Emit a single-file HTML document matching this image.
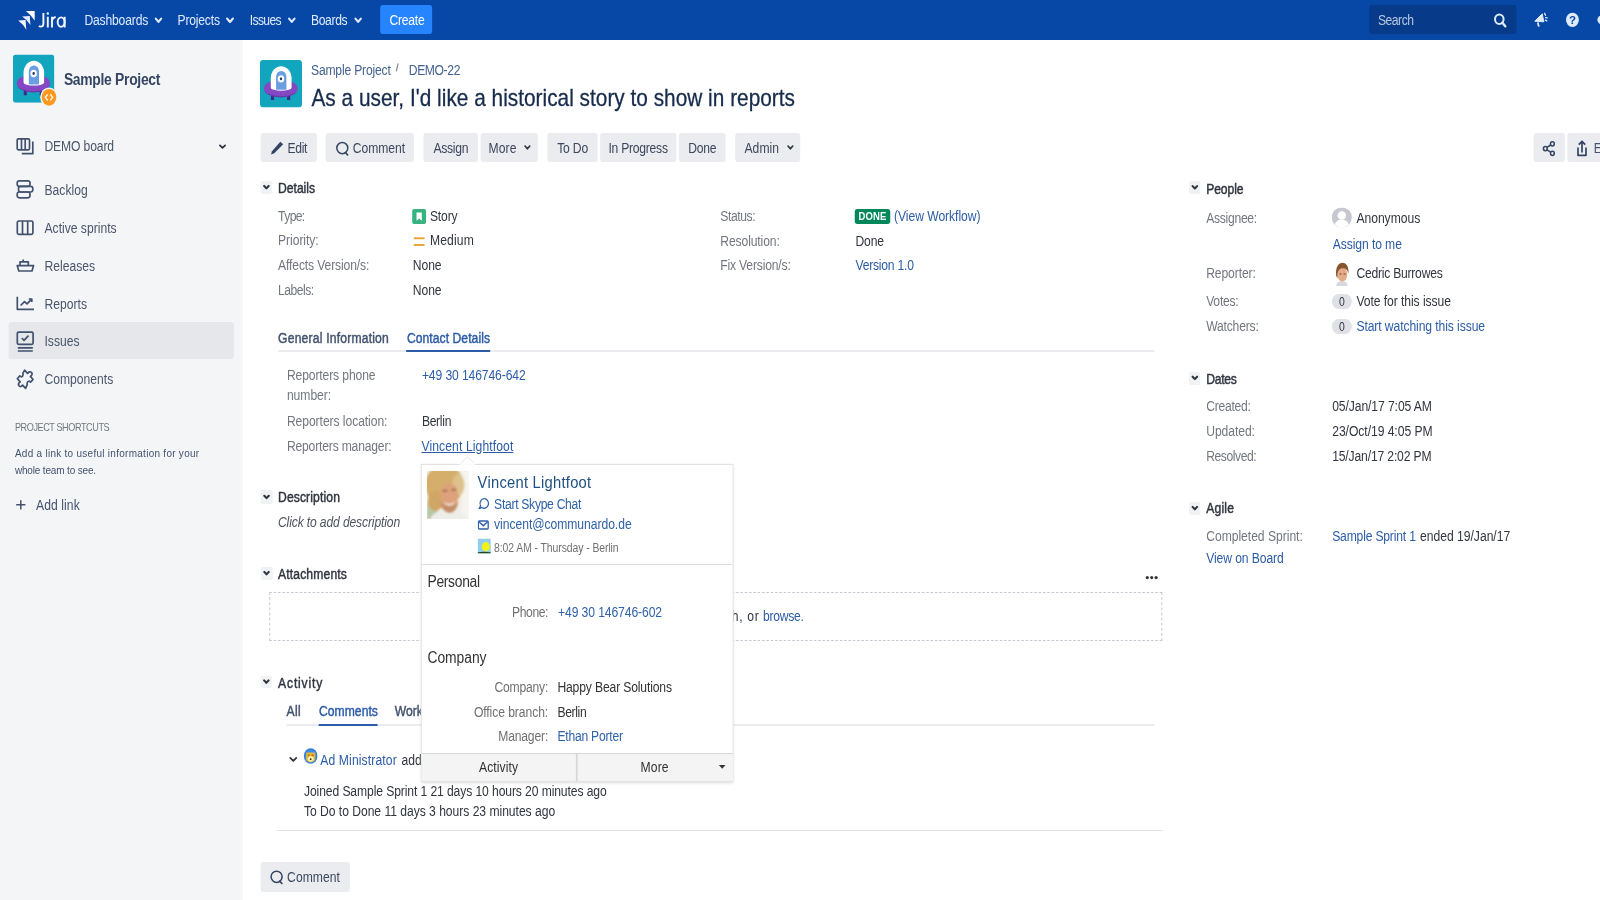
<!DOCTYPE html>
<html><head><meta charset="utf-8"><style>
html,body{margin:0;padding:0;width:1600px;height:900px;overflow:hidden;background:#fff;}
#w{position:absolute;left:0;top:0;width:1847.58px;height:900px;transform:scaleX(0.866);transform-origin:0 0;font-family:"Liberation Sans",sans-serif;}
.t{position:absolute;white-space:nowrap;}
.r{position:absolute;box-sizing:border-box;}
</style></head><body><div id="w">
<div class="r" style="left:0.00px;top:0.00px;width:1847.58px;height:40.00px;background:#0747A6;"></div>
<div class="r" style="left:0.00px;top:40.00px;width:280.02px;height:860.00px;background:#F4F5F7;"></div>
<span class="t" style="left:97.46px;top:12.60px;font-size:14px;line-height:14px;color:#DEEBFF;letter-spacing:-0.193px;">Dashboards</span>
<span class="t" style="left:204.97px;top:12.60px;font-size:14px;line-height:14px;color:#DEEBFF;letter-spacing:-0.223px;">Projects</span>
<span class="t" style="left:288.39px;top:12.60px;font-size:14px;line-height:14px;color:#DEEBFF;letter-spacing:-0.729px;">Issues</span>
<span class="t" style="left:359.12px;top:12.60px;font-size:14px;line-height:14px;color:#DEEBFF;letter-spacing:-0.417px;">Boards</span>
<div class="r" style="left:439.09px;top:5.00px;width:60.33px;height:29.40px;background:#2684FF;border-radius:3px;"></div>
<span class="t" style="left:449.65px;top:12.60px;font-size:14px;line-height:14px;color:#fff;letter-spacing:-0.267px;">Create</span>
<div class="r" style="left:1581.29px;top:5.25px;width:169.28px;height:29.05px;background:#083A8A;border-radius:3px;"></div>
<span class="t" style="left:1591.11px;top:13.30px;font-size:14px;line-height:14px;color:#B8C7E0;letter-spacing:-0.542px;">Search</span>
<span class="t" style="left:73.79px;top:71.70px;font-size:16px;line-height:16px;color:#344563;font-weight:bold;letter-spacing:-0.323px;">Sample Project</span>
<div class="r" style="left:10.05px;top:322.10px;width:259.93px;height:37.30px;background:#E5E7EB;border-radius:3px;"></div>
<span class="t" style="left:51.39px;top:139.10px;font-size:14px;line-height:14px;color:#4A566B;letter-spacing:-0.156px;">DEMO board</span>
<span class="t" style="left:51.39px;top:182.80px;font-size:14px;line-height:14px;color:#4A566B;">Backlog</span>
<span class="t" style="left:51.39px;top:220.50px;font-size:14px;line-height:14px;color:#4A566B;">Active sprints</span>
<span class="t" style="left:51.39px;top:258.80px;font-size:14px;line-height:14px;color:#4A566B;">Releases</span>
<span class="t" style="left:51.39px;top:296.70px;font-size:14px;line-height:14px;color:#4A566B;">Reports</span>
<span class="t" style="left:51.39px;top:334.40px;font-size:14px;line-height:14px;color:#4A566B;">Issues</span>
<span class="t" style="left:51.39px;top:372.30px;font-size:14px;line-height:14px;color:#4A566B;">Components</span>
<span class="t" style="left:17.21px;top:422.45px;font-size:10.5px;line-height:10.5px;color:#72777F;letter-spacing:-0.467px;">PROJECT SHORTCUTS</span>
<span class="t" style="left:17.21px;top:448.15px;font-size:11.5px;line-height:11.5px;color:#42526E;letter-spacing:0.332px;">Add a link to useful information for your</span>
<span class="t" style="left:17.21px;top:464.85px;font-size:11.5px;line-height:11.5px;color:#42526E;letter-spacing:-0.166px;">whole team to see.</span>
<span class="t" style="left:41.57px;top:497.70px;font-size:14px;line-height:14px;color:#42526E;letter-spacing:0.096px;">Add link</span>
<span class="t" style="left:359.12px;top:62.60px;font-size:14px;line-height:14px;color:#42628F;letter-spacing:-0.215px;">Sample Project</span>
<span class="t" style="left:472.00px;top:62.60px;font-size:14px;line-height:14px;color:#42628F;letter-spacing:-0.436px;">DEMO-22</span>
<span class="t" style="left:359.70px;top:86.00px;font-size:24px;line-height:24px;color:#172B4D;letter-spacing:0.026px;-webkit-text-stroke:0.3px currentColor;">As a user, I&#x27;d like a historical story to show in reports</span>
<div class="r" style="left:300.52px;top:133.00px;width:65.07px;height:29.00px;background:#EBECF0;border-radius:3px;"></div>
<span class="t" style="left:331.87px;top:140.65px;font-size:14px;line-height:14px;color:#3B475C;letter-spacing:-0.315px;">Edit</span>
<div class="r" style="left:375.87px;top:133.00px;width:102.48px;height:29.00px;background:#EBECF0;border-radius:3px;"></div>
<span class="t" style="left:407.27px;top:140.65px;font-size:14px;line-height:14px;color:#3B475C;letter-spacing:-0.008px;">Comment</span>
<div class="r" style="left:488.91px;top:133.00px;width:62.82px;height:29.00px;background:#EBECF0;border-radius:3px;"></div>
<span class="t" style="left:500.58px;top:140.65px;font-size:14px;line-height:14px;color:#3B475C;letter-spacing:-0.325px;">Assign</span>
<div class="r" style="left:554.50px;top:133.00px;width:66.86px;height:29.00px;background:#EBECF0;border-radius:3px;"></div>
<span class="t" style="left:564.20px;top:140.65px;font-size:14px;line-height:14px;color:#3B475C;letter-spacing:0.109px;">More</span>
<div class="r" style="left:632.45px;top:133.00px;width:57.62px;height:29.00px;background:#EBECF0;border-radius:3px;"></div>
<span class="t" style="left:643.42px;top:140.65px;font-size:14px;line-height:14px;color:#3B475C;letter-spacing:-0.201px;">To Do</span>
<div class="r" style="left:692.96px;top:133.00px;width:87.88px;height:29.00px;background:#EBECF0;border-radius:3px;"></div>
<span class="t" style="left:702.66px;top:140.65px;font-size:14px;line-height:14px;color:#3B475C;letter-spacing:-0.293px;">In Progress</span>
<div class="r" style="left:784.06px;top:133.00px;width:54.39px;height:29.00px;background:#EBECF0;border-radius:3px;"></div>
<span class="t" style="left:794.69px;top:140.65px;font-size:14px;line-height:14px;color:#3B475C;letter-spacing:-0.313px;">Done</span>
<div class="r" style="left:849.08px;top:133.00px;width:75.40px;height:29.00px;background:#EBECF0;border-radius:3px;"></div>
<span class="t" style="left:859.58px;top:140.65px;font-size:14px;line-height:14px;color:#3B475C;letter-spacing:0.100px;">Admin</span>
<div class="r" style="left:1770.67px;top:133.40px;width:36.49px;height:28.60px;background:#EBECF0;border-radius:3px;"></div>
<div class="r" style="left:1809.70px;top:133.40px;width:49.42px;height:28.60px;background:#EBECF0;border-radius:3px;"></div>
<span class="t" style="left:1840.30px;top:140.65px;font-size:14px;line-height:14px;color:#42526E;">Export</span>
<div class="r" style="left:300.81px;top:180.80px;width:13.63px;height:13.00px;background:#F1F2F4;border-radius:2px;"></div>
<span class="t" style="left:321.13px;top:180.60px;font-size:14px;line-height:14px;color:#30353F;-webkit-text-stroke:0.45px currentColor;letter-spacing:-0.026px;">Details</span>
<span class="t" style="left:321.13px;top:208.50px;font-size:14px;line-height:14px;color:#72777F;letter-spacing:-0.728px;">Type:</span>
<span class="t" style="left:321.13px;top:233.10px;font-size:14px;line-height:14px;color:#72777F;letter-spacing:-0.076px;">Priority:</span>
<span class="t" style="left:321.13px;top:257.70px;font-size:14px;line-height:14px;color:#72777F;letter-spacing:-0.150px;">Affects Version/s:</span>
<span class="t" style="left:321.13px;top:283.00px;font-size:14px;line-height:14px;color:#72777F;letter-spacing:-0.593px;">Labels:</span>
<div class="r" style="left:475.98px;top:209.00px;width:15.94px;height:15.10px;background:#36B37E;border-radius:2px;"></div>
<span class="t" style="left:496.42px;top:208.50px;font-size:14px;line-height:14px;color:#30353F;letter-spacing:-0.161px;">Story</span>
<span class="t" style="left:496.42px;top:233.10px;font-size:14px;line-height:14px;color:#30353F;letter-spacing:0.169px;">Medium</span>
<span class="t" style="left:476.67px;top:257.70px;font-size:14px;line-height:14px;color:#30353F;letter-spacing:-0.082px;">None</span>
<span class="t" style="left:476.67px;top:283.00px;font-size:14px;line-height:14px;color:#30353F;letter-spacing:-0.082px;">None</span>
<span class="t" style="left:831.76px;top:208.75px;font-size:14px;line-height:14px;color:#72777F;letter-spacing:-0.485px;">Status:</span>
<span class="t" style="left:831.76px;top:233.50px;font-size:14px;line-height:14px;color:#72777F;letter-spacing:-0.132px;">Resolution:</span>
<span class="t" style="left:831.76px;top:258.30px;font-size:14px;line-height:14px;color:#72777F;letter-spacing:-0.204px;">Fix Version/s:</span>
<div class="r" style="left:987.30px;top:208.80px;width:40.42px;height:15.40px;background:#00875A;border-radius:3px;"></div>
<span class="t" style="left:991.34px;top:211.00px;font-size:11px;line-height:11px;color:#fff;font-weight:bold;letter-spacing:0.138px;">DONE</span>
<span class="t" style="left:1032.33px;top:208.50px;font-size:14px;line-height:14px;color:#2C5CA8;letter-spacing:-0.048px;">(View Workflow)</span>
<span class="t" style="left:987.88px;top:233.50px;font-size:14px;line-height:14px;color:#30353F;letter-spacing:-0.197px;">Done</span>
<span class="t" style="left:987.88px;top:258.30px;font-size:14px;line-height:14px;color:#2C5CA8;letter-spacing:-0.258px;">Version 1.0</span>
<span class="t" style="left:321.13px;top:330.80px;font-size:14px;line-height:14px;color:#42526E;-webkit-text-stroke:0.45px currentColor;letter-spacing:0.228px;">General Information</span>
<span class="t" style="left:469.86px;top:330.80px;font-size:14px;line-height:14px;color:#2C5CA8;-webkit-text-stroke:0.45px currentColor;letter-spacing:0.069px;">Contact Details</span>
<div class="r" style="left:321.02px;top:350.00px;width:1011.55px;height:2.00px;background:#EBECF0;"></div>
<div class="r" style="left:469.11px;top:350.00px;width:96.71px;height:2.30px;background:#2C5CA8;"></div>
<span class="t" style="left:331.29px;top:368.30px;font-size:14px;line-height:14px;color:#72777F;letter-spacing:-0.140px;">Reporters phone</span>
<span class="t" style="left:331.29px;top:388.00px;font-size:14px;line-height:14px;color:#72777F;letter-spacing:-0.029px;">number:</span>
<span class="t" style="left:331.29px;top:413.60px;font-size:14px;line-height:14px;color:#72777F;letter-spacing:-0.076px;">Reporters location:</span>
<span class="t" style="left:331.29px;top:438.60px;font-size:14px;line-height:14px;color:#72777F;letter-spacing:-0.207px;">Reporters manager:</span>
<span class="t" style="left:487.18px;top:368.30px;font-size:14px;line-height:14px;color:#2C5CA8;letter-spacing:-0.123px;">+49 30 146746-642</span>
<span class="t" style="left:487.18px;top:413.60px;font-size:14px;line-height:14px;color:#30353F;letter-spacing:-0.346px;">Berlin</span>
<span class="t" style="left:486.61px;top:438.60px;font-size:14px;line-height:14px;color:#2C5CA8;letter-spacing:0.129px;text-decoration:underline;">Vincent Lightfoot</span>
<div class="r" style="left:301.04px;top:490.30px;width:13.51px;height:13.60px;background:#F1F2F4;border-radius:2px;"></div>
<span class="t" style="left:321.02px;top:490.00px;font-size:14px;line-height:14px;color:#30353F;-webkit-text-stroke:0.45px currentColor;letter-spacing:0.142px;">Description</span>
<span class="t" style="left:321.02px;top:514.60px;font-size:14px;line-height:14px;color:#4E5461;font-style:italic;letter-spacing:-0.161px;">Click to add description</span>
<div class="r" style="left:301.04px;top:566.50px;width:13.51px;height:13.50px;background:#F1F2F4;border-radius:2px;"></div>
<span class="t" style="left:321.02px;top:566.50px;font-size:14px;line-height:14px;color:#30353F;-webkit-text-stroke:0.45px currentColor;letter-spacing:0.169px;">Attachments</span>
<div class="r" style="left:310.85px;top:592.30px;width:1031.18px;height:48.90px;border:1px dashed #C1C7D0;"></div>
<span class="t" style="left:881.06px;top:609.20px;font-size:14px;line-height:14px;color:#2C5CA8;letter-spacing:-0.322px;">browse.</span>
<span class="t" style="left:721.13px;top:609.20px;font-size:14px;line-height:14px;color:#30353F;letter-spacing:0.789px;">Drop files to attach, or</span>
<div class="r" style="left:301.04px;top:675.50px;width:13.05px;height:12.50px;background:#F1F2F4;border-radius:2px;"></div>
<span class="t" style="left:321.13px;top:675.60px;font-size:14px;line-height:14px;color:#30353F;-webkit-text-stroke:0.45px currentColor;letter-spacing:0.953px;">Activity</span>
<span class="t" style="left:330.95px;top:704.20px;font-size:14px;line-height:14px;color:#42526E;-webkit-text-stroke:0.45px currentColor;letter-spacing:0.395px;">All</span>
<span class="t" style="left:368.24px;top:704.20px;font-size:14px;line-height:14px;color:#2C5CA8;-webkit-text-stroke:0.45px currentColor;letter-spacing:0.070px;">Comments</span>
<span class="t" style="left:455.89px;top:704.20px;font-size:14px;line-height:14px;color:#42526E;-webkit-text-stroke:0.45px currentColor;">Work Log</span>
<div class="r" style="left:330.95px;top:724.00px;width:1001.62px;height:2.00px;background:#EBECF0;"></div>
<div class="r" style="left:368.24px;top:724.00px;width:68.24px;height:2.40px;background:#2C5CA8;"></div>
<span class="t" style="left:369.86px;top:752.60px;font-size:14px;line-height:14px;color:#2C5CA8;letter-spacing:0.141px;">Ad Ministrator</span>
<span class="t" style="left:463.63px;top:752.60px;font-size:14px;line-height:14px;color:#30353F;">added a comment</span>
<span class="t" style="left:351.04px;top:784.40px;font-size:14px;line-height:14px;color:#30353F;letter-spacing:-0.116px;">Joined Sample Sprint 1 21 days 10 hours 20 minutes ago</span>
<span class="t" style="left:351.04px;top:804.10px;font-size:14px;line-height:14px;color:#30353F;letter-spacing:-0.037px;">To Do to Done 11 days 3 hours 23 minutes ago</span>
<div class="r" style="left:319.52px;top:830.20px;width:1022.29px;height:1.00px;background:#DFE1E6;"></div>
<div class="r" style="left:301.04px;top:861.90px;width:102.89px;height:30.10px;background:#EBECF0;border-radius:3px;"></div>
<span class="t" style="left:331.52px;top:870.20px;font-size:14px;line-height:14px;color:#3B475C;letter-spacing:0.058px;">Comment</span>
<div class="r" style="left:1373.21px;top:180.90px;width:13.05px;height:13.10px;background:#F1F2F4;border-radius:2px;"></div>
<span class="t" style="left:1392.84px;top:181.50px;font-size:14px;line-height:14px;color:#30353F;-webkit-text-stroke:0.45px currentColor;letter-spacing:-0.087px;">People</span>
<span class="t" style="left:1392.84px;top:210.90px;font-size:14px;line-height:14px;color:#72777F;letter-spacing:-0.326px;">Assignee:</span>
<span class="t" style="left:1392.84px;top:265.50px;font-size:14px;line-height:14px;color:#72777F;letter-spacing:-0.120px;">Reporter:</span>
<span class="t" style="left:1392.84px;top:294.40px;font-size:14px;line-height:14px;color:#72777F;letter-spacing:-0.270px;">Votes:</span>
<span class="t" style="left:1392.84px;top:319.30px;font-size:14px;line-height:14px;color:#72777F;letter-spacing:-0.221px;">Watchers:</span>
<span class="t" style="left:1566.28px;top:210.90px;font-size:14px;line-height:14px;color:#30353F;letter-spacing:-0.029px;">Anonymous</span>
<span class="t" style="left:1539.03px;top:236.60px;font-size:14px;line-height:14px;color:#2C5CA8;letter-spacing:-0.104px;">Assign to me</span>
<span class="t" style="left:1566.28px;top:265.50px;font-size:14px;line-height:14px;color:#30353F;letter-spacing:-0.270px;">Cedric Burrowes</span>
<div class="r" style="left:1538.34px;top:293.80px;width:22.75px;height:15.20px;background:#DFE1E6;border-radius:8px;"></div>
<span class="t" style="left:1546.32px;top:295.50px;font-size:12px;line-height:12px;color:#30353F;">0</span>
<span class="t" style="left:1566.28px;top:294.40px;font-size:14px;line-height:14px;color:#30353F;letter-spacing:-0.073px;">Vote for this issue</span>
<div class="r" style="left:1538.34px;top:319.00px;width:22.75px;height:15.00px;background:#DFE1E6;border-radius:8px;"></div>
<span class="t" style="left:1546.32px;top:320.50px;font-size:12px;line-height:12px;color:#30353F;">0</span>
<span class="t" style="left:1566.28px;top:319.30px;font-size:14px;line-height:14px;color:#2C5CA8;letter-spacing:-0.098px;">Start watching this issue</span>
<div class="r" style="left:1373.21px;top:371.50px;width:13.05px;height:13.10px;background:#F1F2F4;border-radius:2px;"></div>
<span class="t" style="left:1392.84px;top:371.60px;font-size:14px;line-height:14px;color:#30353F;-webkit-text-stroke:0.45px currentColor;letter-spacing:-0.271px;">Dates</span>
<span class="t" style="left:1392.84px;top:398.90px;font-size:14px;line-height:14px;color:#72777F;letter-spacing:-0.289px;">Created:</span>
<span class="t" style="left:1538.34px;top:398.90px;font-size:14px;line-height:14px;color:#30353F;letter-spacing:-0.100px;">05/Jan/17 7:05 AM</span>
<span class="t" style="left:1392.84px;top:424.10px;font-size:14px;line-height:14px;color:#72777F;letter-spacing:-0.073px;">Updated:</span>
<span class="t" style="left:1538.34px;top:424.10px;font-size:14px;line-height:14px;color:#30353F;letter-spacing:-0.054px;">23/Oct/19 4:05 PM</span>
<span class="t" style="left:1392.84px;top:448.80px;font-size:14px;line-height:14px;color:#72777F;letter-spacing:-0.502px;">Resolved:</span>
<span class="t" style="left:1538.34px;top:448.80px;font-size:14px;line-height:14px;color:#30353F;letter-spacing:-0.175px;">15/Jan/17 2:02 PM</span>
<div class="r" style="left:1373.21px;top:501.70px;width:13.05px;height:13.10px;background:#F1F2F4;border-radius:2px;"></div>
<span class="t" style="left:1392.84px;top:501.30px;font-size:14px;line-height:14px;color:#30353F;-webkit-text-stroke:0.45px currentColor;letter-spacing:0.240px;">Agile</span>
<span class="t" style="left:1392.84px;top:529.10px;font-size:14px;line-height:14px;color:#72777F;letter-spacing:-0.030px;">Completed Sprint:</span>
<span class="t" style="left:1538.34px;top:529.10px;font-size:14px;line-height:14px;color:#2C5CA8;letter-spacing:-0.212px;">Sample Sprint 1</span>
<span class="t" style="left:1639.72px;top:529.10px;font-size:14px;line-height:14px;color:#30353F;letter-spacing:-0.011px;">ended 19/Jan/17</span>
<span class="t" style="left:1392.84px;top:551.10px;font-size:14px;line-height:14px;color:#2C5CA8;letter-spacing:-0.101px;">View on Board</span>
<div class="r" style="left:485.80px;top:463.70px;width:360.97px;height:318.50px;background:#fff;border:1px solid #E2E2E2;box-shadow:0 1px 3px rgba(0,0,0,0.14);"></div>
<span class="t" style="left:551.50px;top:474.40px;font-size:17px;line-height:17px;color:#205081;letter-spacing:0.298px;">Vincent Lightfoot</span>
<span class="t" style="left:570.55px;top:497.00px;font-size:14px;line-height:14px;color:#2F62A8;letter-spacing:-0.335px;">Start Skype Chat</span>
<span class="t" style="left:570.55px;top:516.80px;font-size:14px;line-height:14px;color:#2F62A8;letter-spacing:-0.046px;">vincent@communardo.de</span>
<span class="t" style="left:570.55px;top:541.50px;font-size:12px;line-height:12px;color:#707070;letter-spacing:-0.079px;">8:02 AM - Thursday - Berlin</span>
<div class="r" style="left:486.95px;top:563.50px;width:358.66px;height:1.00px;background:#DDDDDD;"></div>
<span class="t" style="left:493.65px;top:573.90px;font-size:16px;line-height:16px;color:#333333;letter-spacing:-0.359px;">Personal</span>
<span class="t" style="left:591.22px;top:604.90px;font-size:14px;line-height:14px;color:#707070;letter-spacing:-0.448px;">Phone:</span>
<span class="t" style="left:644.34px;top:604.90px;font-size:14px;line-height:14px;color:#2F62A8;letter-spacing:-0.103px;">+49 30 146746-602</span>
<span class="t" style="left:493.65px;top:649.50px;font-size:16px;line-height:16px;color:#333333;letter-spacing:-0.050px;">Company</span>
<span class="t" style="left:571.02px;top:679.90px;font-size:14px;line-height:14px;color:#707070;letter-spacing:-0.239px;">Company:</span>
<span class="t" style="left:643.65px;top:679.90px;font-size:14px;line-height:14px;color:#333333;letter-spacing:-0.160px;">Happy Bear Solutions</span>
<span class="t" style="left:547.23px;top:704.60px;font-size:14px;line-height:14px;color:#707070;letter-spacing:-0.087px;">Office branch:</span>
<span class="t" style="left:643.65px;top:704.60px;font-size:14px;line-height:14px;color:#333333;letter-spacing:-0.384px;">Berlin</span>
<span class="t" style="left:575.29px;top:729.30px;font-size:14px;line-height:14px;color:#707070;letter-spacing:-0.190px;">Manager:</span>
<span class="t" style="left:643.65px;top:729.30px;font-size:14px;line-height:14px;color:#2F62A8;letter-spacing:-0.257px;">Ethan Porter</span>
<div class="r" style="left:486.95px;top:753.30px;width:358.66px;height:27.90px;background:#F4F4F4;border-top:1px solid #D6D6D6;"></div>
<div class="r" style="left:665.36px;top:753.30px;width:1.15px;height:27.90px;background:#D6D6D6;"></div>
<span class="t" style="left:553.12px;top:760.30px;font-size:14px;line-height:14px;color:#333333;letter-spacing:0.116px;">Activity</span>
<span class="t" style="left:739.55px;top:760.30px;font-size:14px;line-height:14px;color:#333333;letter-spacing:0.196px;">More</span>
</div>
<svg id="ov" width="1600" height="900" viewBox="0 0 1600 900" style="position:absolute;left:0;top:0;">
<path d="M25.9 11.1H34.7V20.4Q31 15 25.9 11.1Z" fill="#fff"/>
<path d="M22.1 16.4L29.8 15.9L30.4 24.9Q27 19.5 22.1 16.4Z" fill="#E8EEFF"/>
<path d="M18.2 20.4L25.6 20.1L26.3 29.8Q23 23.8 18.2 20.4Z" fill="#F0F4FF"/>
<g fill="none" stroke="#F2F6FF" stroke-width="1.9"><path d="M43.4 12.9V23.8Q43.4 26.6 40.8 26.6Q39.6 26.6 38.9 26"/><path d="M47.8 16.7V27.5"/><path d="M52 16.7V27.5M52 20.6Q52.5 17.2 55.8 17.1"/><ellipse cx="61.1" cy="22.1" rx="3.45" ry="4.75"/><path d="M64.7 16.8V27.5"/></g><circle cx="47.8" cy="13.5" r="1.2" fill="#F2F6FF"/>
<path d="M155.80 18.55L158.50 21.95L161.20 18.55" fill="none" stroke="#DEEBFF" stroke-width="2.1" stroke-linecap="round" stroke-linejoin="round"/>
<path d="M227.05 18.55L230.00 21.95L232.95 18.55" fill="none" stroke="#DEEBFF" stroke-width="2.1" stroke-linecap="round" stroke-linejoin="round"/>
<path d="M289.05 18.55L291.80 21.95L294.55 18.55" fill="none" stroke="#DEEBFF" stroke-width="2.1" stroke-linecap="round" stroke-linejoin="round"/>
<path d="M355.45 18.55L358.15 21.95L360.85 18.55" fill="none" stroke="#DEEBFF" stroke-width="2.1" stroke-linecap="round" stroke-linejoin="round"/>
<ellipse cx="1499.3" cy="19.2" rx="4.3" ry="4.8" fill="none" stroke="#DEEBFF" stroke-width="2"/><path d="M1502.2 22.6L1505.3 26.3" stroke="#DEEBFF" stroke-width="2.4" stroke-linecap="round"/>
<path d="M1534.8 21.2L1542.2 13.8L1543.8 21.8Z" fill="#DEEBFF" stroke="#DEEBFF" stroke-width="1" stroke-linejoin="round"/><path d="M1537.8 22.5L1538.8 26.6" stroke="#DEEBFF" stroke-width="1.8"/><path d="M1544.6 13.4L1545.5 15.3M1545.6 17.6L1547.2 17.9M1545.3 20.2L1546.8 20.9" stroke="#DEEBFF" stroke-width="1.3" stroke-linecap="round"/>
<ellipse cx="1572.45" cy="19.85" rx="6.45" ry="7.15" fill="#DEEBFF"/><text x="1572.45" y="24.3" font-size="11.5" font-weight="bold" text-anchor="middle" fill="#0747A6" font-family="Liberation Sans">?</text>
<circle cx="1602" cy="19.8" r="4.6" fill="#DEEBFF"/>
<svg x="12.9" y="54.4" width="41.5" height="48.300000000000004" viewBox="0 0 48 48" preserveAspectRatio="none"><rect width="48" height="48" rx="3.5" fill="#12A5BE"/><path d="M12.5 35h3.6v5.5h-3.6zM31 35h3.6v5.5H31z" fill="#3D2A8A"/><ellipse cx="23.8" cy="28.6" rx="19.3" ry="8.8" fill="#8548C4"/><path d="M4.6 29.5a19.3 8.4 0 0 0 38.6 0a19.3 7 0 0 1-38.6 0z" fill="#6C37AC"/><path d="M12.3 28V18.5a11.9 12.3 0 0 1 23.8 0V28a11.9 3 0 0 1-23.8 0z" fill="#FFFFFF"/><path d="M18.4 30V17a5.9 6 0 0 1 11.8 0V30z" fill="#6A9EE0"/><circle cx="24" cy="19" r="3.7" fill="#fff"/><circle cx="24" cy="19" r="1.4" fill="#253858"/><path d="M5 29.2a19 6.2 0 0 0 38 0a19 4.8 0 0 1-38 0z" fill="#8548C4"/></svg>
<ellipse cx="49" cy="97.3" rx="8.8" ry="9.9" fill="#F4F5F7"/><ellipse cx="49" cy="97.3" rx="7.3" ry="8.4" fill="#FF991F"/><path d="M47.6 94.3L45.4 97.3L47.6 100.3M50.4 94.3L52.6 97.3L50.4 100.3" fill="none" stroke="#fff" stroke-width="1.3"/>
<svg x="260" y="60" width="42" height="47.5" viewBox="0 0 48 48" preserveAspectRatio="none"><rect width="48" height="48" rx="3.5" fill="#12A5BE"/><path d="M12.5 35h3.6v5.5h-3.6zM31 35h3.6v5.5H31z" fill="#3D2A8A"/><ellipse cx="23.8" cy="28.6" rx="19.3" ry="8.8" fill="#8548C4"/><path d="M4.6 29.5a19.3 8.4 0 0 0 38.6 0a19.3 7 0 0 1-38.6 0z" fill="#6C37AC"/><path d="M12.3 28V18.5a11.9 12.3 0 0 1 23.8 0V28a11.9 3 0 0 1-23.8 0z" fill="#FFFFFF"/><path d="M18.4 30V17a5.9 6 0 0 1 11.8 0V30z" fill="#6A9EE0"/><circle cx="24" cy="19" r="3.7" fill="#fff"/><circle cx="24" cy="19" r="1.4" fill="#253858"/><path d="M5 29.2a19 6.2 0 0 0 38 0a19 4.8 0 0 1-38 0z" fill="#8548C4"/></svg>
<path d="M219.90 145.40L222.50 147.90L225.10 145.40" fill="none" stroke="#30353F" stroke-width="1.8" stroke-linecap="round" stroke-linejoin="round"/>
<g fill="none" stroke="#42526E" stroke-width="1.7" stroke-linejoin="round"><rect x="17.2" y="138.8" width="12.3" height="11" rx="1.2"/><path d="M21.5 138.8v11M25.2 138.8v11"/><path d="M32.8 141.5V153.7H21.8"/><rect x="17.2" y="180.8" width="12.8" height="5.6" rx="2.2"/><rect x="18.5" y="186.4" width="14.3" height="5.6" rx="2.2"/><rect x="17.2" y="192" width="12.8" height="5.8" rx="2.2"/><rect x="17.3" y="221" width="15.6" height="13.3" rx="1.5"/><path d="M22.5 221v13.3M27.7 221v13.3"/><path d="M17.2 265.6H33.6L32 271H18.8Z"/><path d="M20 265.6V261.8H28.3V265.6M23.2 261.8V259.4"/><path d="M17.3 296.8V309.3H34"/><path d="M20.6 305.5L24.5 301.6L27 303.8L31.6 299.2M28.8 299H31.8V302"/><rect x="17.3" y="332.2" width="15.8" height="12.2" rx="1.3"/><path d="M21.8 338.2L24 340.3L28.5 335.6"/><path d="M17.8 347.8H32.8M17.8 351H32.8"/><path d="M24.6 370.2L27.6 373.4Q29.6 370.6 31.6 372.6Q33 374.6 30.4 376.4L33.1 379.5L30.6 382.1Q28.4 380.2 27.4 382.4Q26.8 383.6 27.3 384.4L25.6 388.4L22.6 385.1Q20.6 387.9 18.8 385.6Q17.6 383.6 20.2 381.9L17.3 378.7L19.8 375.9Q22 377.8 22.8 375.6Q23.4 374.4 22.8 373.4Z"/></g>
<path d="M20.8 500.2V509.5M16.2 504.85H25.4" stroke="#42526E" stroke-width="1.5"/>
<path d="M396.3 71.3L398.1 63.3" stroke="#7A8090" stroke-width="1.1"/>
<path d="M280.3 141.8L283.2 144.3L274.3 153.3L271.0 154.6L272.0 151.2Z" fill="#344563"/>
<ellipse cx="342.3" cy="148.1" rx="5.5" ry="5.6" fill="none" stroke="#344563" stroke-width="1.5"/><path d="M345.4 152.5L347.6 154.8" stroke="#344563" stroke-width="1.7" stroke-linecap="round"/>
<path d="M525.05 146.05L527.40 148.75L529.75 146.05" fill="none" stroke="#30353F" stroke-width="1.7" stroke-linecap="round" stroke-linejoin="round"/>
<path d="M788.05 146.05L790.40 148.75L792.75 146.05" fill="none" stroke="#30353F" stroke-width="1.7" stroke-linecap="round" stroke-linejoin="round"/>
<g fill="none" stroke="#344563" stroke-width="1.5"><ellipse cx="1545.3" cy="148.6" rx="1.9" ry="2.1"/><ellipse cx="1552.4" cy="143.8" rx="1.9" ry="2.1"/><ellipse cx="1552.4" cy="153.3" rx="1.9" ry="2.1"/><path d="M1547 147.3L1550.6 145M1547 149.9L1550.6 152.1"/></g>
<g fill="none" stroke="#344563" stroke-width="1.7" stroke-linejoin="round"><path d="M1582 141.5V152.5M1578.8 144.6L1582 141.3L1585.2 144.6"/><path d="M1578 147.5V155.3H1586V147.5"/></g>
<path d="M264.15 185.95L266.40 188.35L268.65 185.95" fill="none" stroke="#30353F" stroke-width="2.1" stroke-linecap="round" stroke-linejoin="round"/>
<path d="M416.5 212.5H421.8V220.8L419.15 218.6L416.5 220.8Z" fill="#fff"/>
<path d="M413.8 238.2H424.5M413.8 245H424.5" stroke="#EAA63A" stroke-width="1.9"/>
<path d="M264.30 495.75L266.55 498.15L268.80 495.75" fill="none" stroke="#30353F" stroke-width="2.1" stroke-linecap="round" stroke-linejoin="round"/>
<path d="M264.30 571.90L266.55 574.30L268.80 571.90" fill="none" stroke="#30353F" stroke-width="2.1" stroke-linecap="round" stroke-linejoin="round"/>
<circle cx="1147.3" cy="577.6" r="1.6" fill="#30353F"/><circle cx="1151.7" cy="577.6" r="1.6" fill="#30353F"/><circle cx="1156.1" cy="577.6" r="1.6" fill="#30353F"/>
<path d="M264.10 680.40L266.35 682.80L268.60 680.40" fill="none" stroke="#30353F" stroke-width="2.1" stroke-linecap="round" stroke-linejoin="round"/>
<path d="M290.30 757.90L293.30 760.90L296.30 757.90" fill="none" stroke="#30353F" stroke-width="1.8" stroke-linecap="round" stroke-linejoin="round"/>
<svg x="303.65" y="748" width="14.050000000000011" height="15.899999999999977" viewBox="0 0 16 16" preserveAspectRatio="none"><circle cx="8" cy="8" r="7.8" fill="#2F7FD8"/><circle cx="8" cy="8" r="6.6" fill="#3B8CE6"/><path d="M2.8 4.5H13.2V10.5C13.2 13 11 14.3 8 14.3S2.8 13 2.8 10.5Z" fill="#E8B53C"/><path d="M4.5 11C5 9 6.5 8.6 8 8.6S11 9 11.5 11C11 13 9.5 13.6 8 13.6S5 13 4.5 11Z" fill="#FFF4B0"/><path d="M4.6 7.2h2.2M9.2 7.2h2.2" stroke="#A86A10" stroke-width="1.2"/><circle cx="8" cy="11.2" r="1" fill="#3A2A10"/></svg>
<ellipse cx="276.6" cy="876.8" rx="5.5" ry="5.6" fill="none" stroke="#344563" stroke-width="1.5"/><path d="M279.7 881.2L281.9 883.5" stroke="#344563" stroke-width="1.7" stroke-linecap="round"/>
<path d="M1192.60 186.10L1194.85 188.50L1197.10 186.10" fill="none" stroke="#30353F" stroke-width="2.1" stroke-linecap="round" stroke-linejoin="round"/>
<svg x="1331.7" y="207.4" width="20.200000000000045" height="20.19999999999999" viewBox="0 0 24 24" preserveAspectRatio="none"><circle cx="12" cy="12" r="12" fill="#C5C9CF"/><circle cx="12" cy="9.6" r="5" fill="#fff"/><path d="M3.6 20.3c1.6-4.3 4.5-5.6 8.4-5.6s6.8 1.3 8.4 5.6a12 12 0 0 1-16.8 0z" fill="#fff"/></svg>
<svg x="1333.5" y="261.7" width="16.799999999999955" height="24.19999999999999" viewBox="0 0 19 24" preserveAspectRatio="none"><defs><filter id="bl2" x="-10%" y="-10%" width="120%" height="120%"><feGaussianBlur stdDeviation="0.55"/></filter></defs><g filter="url(#bl2)"><path d="M3 24C3.5 20.5 6 19.5 9.5 19.5S15.5 20.5 16 24Z" fill="#D5D8DE"/><ellipse cx="10" cy="12.5" rx="5.6" ry="7.2" fill="#E2AC88"/><path d="M3 14C2 5 6 1 10 1S17.5 4 17 12C16 8 14 6.5 10.5 6.5C7 6.5 5 8.5 4.5 12L4.5 17Z" fill="#86552F"/><path d="M7 12.2h2M11.5 12.2h2" stroke="#6A4028" stroke-width="1.2"/></g></svg>
<path d="M1192.60 376.70L1194.85 379.10L1197.10 376.70" fill="none" stroke="#30353F" stroke-width="2.1" stroke-linecap="round" stroke-linejoin="round"/>
<path d="M1192.60 506.90L1194.85 509.30L1197.10 506.90" fill="none" stroke="#30353F" stroke-width="2.1" stroke-linecap="round" stroke-linejoin="round"/>
<path d="M460.3 463.6L467.5 456.6L474.7 463.6" fill="#fff" stroke="#E6E6E6" stroke-width="1"/><rect x="460" y="463.2" width="15" height="1.6" fill="#fff"/>
<svg x="426.9" y="471" width="41.900000000000034" height="47.89999999999998" viewBox="0 0 48 48" preserveAspectRatio="none"><defs><filter id="bl1" x="-10%" y="-10%" width="120%" height="120%"><feGaussianBlur stdDeviation="1.1"/></filter><clipPath id="cp1"><rect width="48" height="48"/></clipPath></defs><g clip-path="url(#cp1)"><rect width="48" height="48" fill="#F1EEE6"/><g filter="url(#bl1)"><rect x="0" y="32" width="12" height="16" fill="#B9C6A6"/><rect x="40" y="0" width="10" height="48" fill="#F6F4EE"/><ellipse cx="20" cy="14" rx="22" ry="20" fill="#D4AE6A"/><ellipse cx="10" cy="30" rx="9" ry="10" fill="#CFA664"/><ellipse cx="36" cy="14" rx="7" ry="11" fill="#DDC28C"/><ellipse cx="25.5" cy="25" rx="10.5" ry="13" fill="#DDA27C"/><path d="M15 30C17 40 22 42 26 42C31 42 35 38 36 30C32 36 19 36 15 30Z" fill="#C58E68"/><path d="M18 20L23.5 19.5M28 19L33.5 18.5" stroke="#8A5A3A" stroke-width="1.5"/><path d="M19.5 31C23 34 29 34 32.5 30.5C31 35.5 21 35.5 19.5 31Z" fill="#FFFFFF"/><path d="M4 48C6 42 14 40 20 40L26 44L32 40C38 40 44 42 46 48Z" fill="#EDEDEA"/></g></g></svg>
<svg x="478.0" y="497.8" width="11.199999999999989" height="11.699999999999989" viewBox="0 0 13 12" preserveAspectRatio="none"><path d="M7.2 0.9a4.9 4.9 0 0 0-4.2 7.4L1.2 11.2l3.4-1.3a4.9 4.9 0 1 0 2.6-9z" fill="none" stroke="#2F62A8" stroke-width="1.4" stroke-linejoin="round"/></svg>
<svg x="477.6" y="520" width="11.399999999999977" height="10" viewBox="0 0 13 10" preserveAspectRatio="none"><rect x="0.9" y="0.9" width="11.2" height="8.2" rx="1" fill="none" stroke="#2F62A8" stroke-width="1.5"/><path d="M1.2 1.5l5.3 4.2 5.3-4.2" fill="none" stroke="#2F62A8" stroke-width="1.5"/></svg>
<svg x="477.6" y="538.5" width="13.199999999999989" height="15.100000000000023" viewBox="0 0 15 15" preserveAspectRatio="none"><rect width="15" height="15" fill="#92CDF0"/><circle cx="9.3" cy="8.2" r="4.6" fill="#F2F216"/><path d="M0 13.6Q7.5 12.6 15 13.6V15H0z" fill="#1E4A1E"/></svg>
<path d="M718.9 765H725.5L722.2 768.8Z" fill="#333"/>
</svg></body></html>
